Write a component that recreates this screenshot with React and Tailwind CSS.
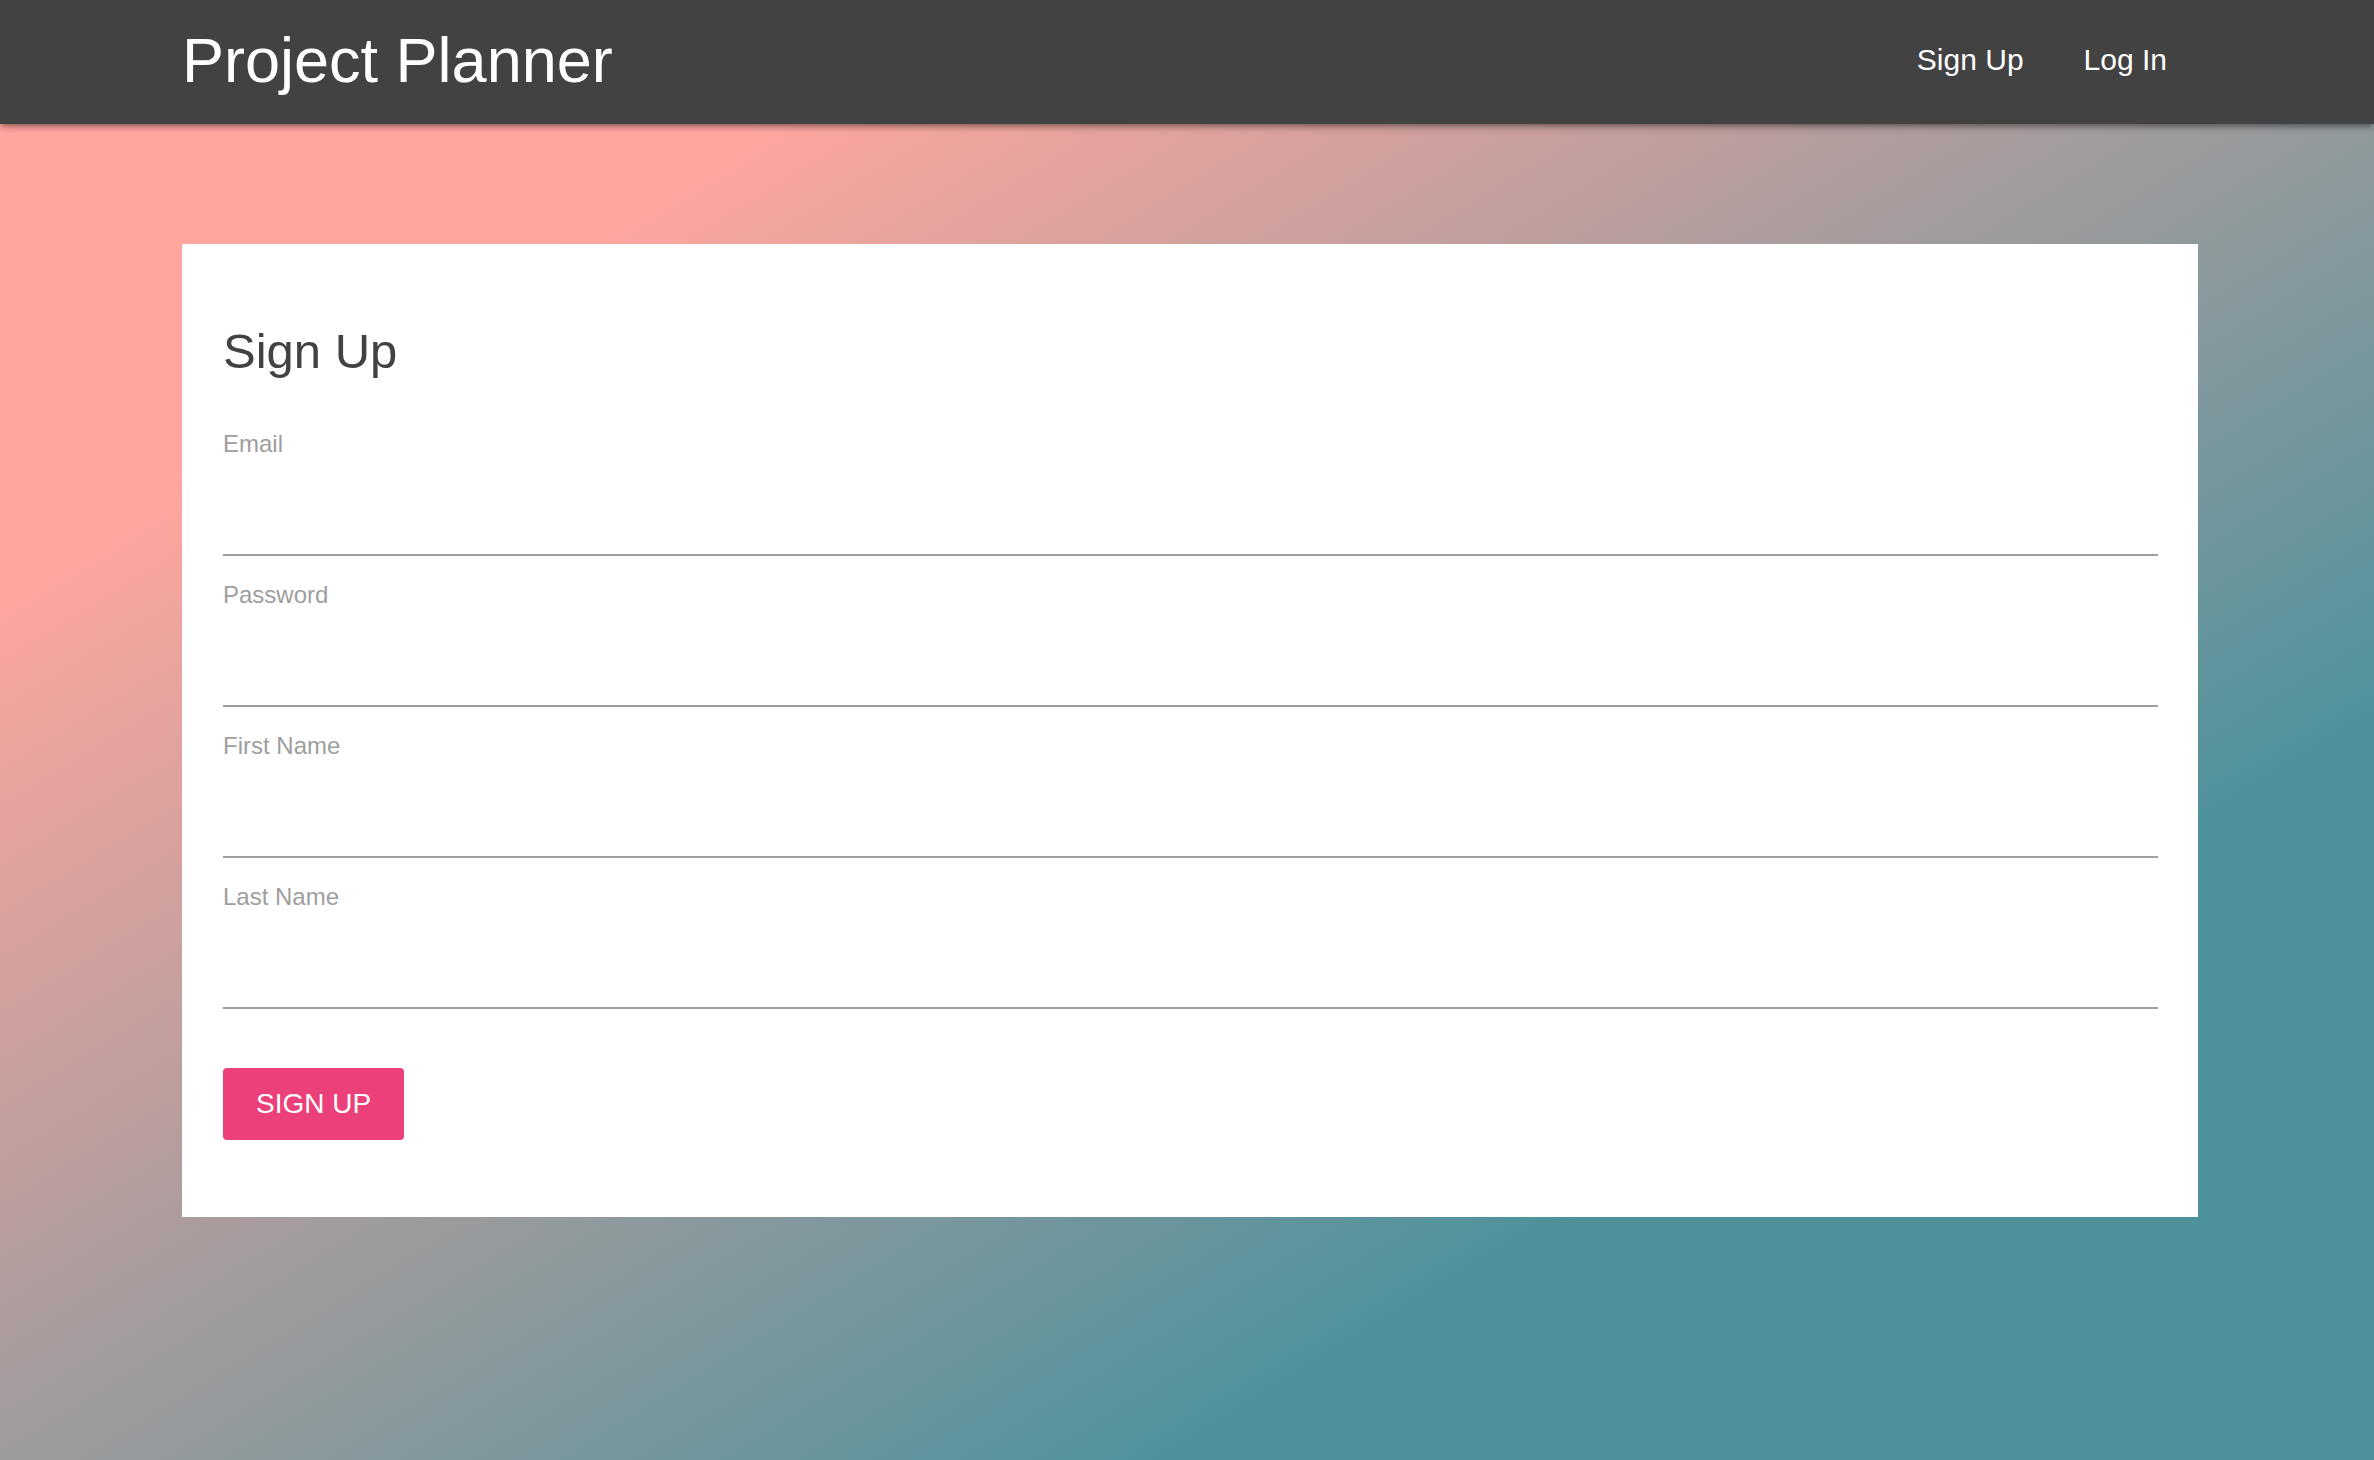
import { useState } from "react";

const fields = [
  { id: "email", label: "Email", type: "email" },
  { id: "password", label: "Password", type: "password" },
  { id: "firstName", label: "First Name", type: "text" },
  { id: "lastName", label: "Last Name", type: "text" },
];

export default function App() {
  const [user, setUser] = useState({});

  const handleChange = (event) => {
    const newUser = { ...user };
    newUser[event.target.id] = event.target.value;
    setUser(newUser);
  };

  const handleSubmit = (event) => {
    event.preventDefault();
  };

  return (
    <div
      className="min-h-screen font-['Liberation_Sans',Arial,sans-serif] bg-[linear-gradient(to_bottom_right,#ffa69e_20%,#4e929c_75%)]"
    >
      <nav className="relative z-10 h-[124px] bg-[#424242] shadow-[0_4px_4px_rgba(0,0,0,0.14),0_6px_2px_-4px_rgba(0,0,0,0.12),0_2px_10px_rgba(0,0,0,0.2)]">
        <div className="flex h-full items-center justify-between pl-[182px] pr-[177px] pb-[4px]">
          <a href="#" className="text-[63px] leading-[124px] text-white">
            Project Planner
          </a>
          <ul className="flex">
            <li>
              <a href="#" className="block px-[30px] text-[30px] leading-[124px] text-white">
                Sign Up
              </a>
            </li>
            <li>
              <a href="#" className="block px-[30px] text-[30px] leading-[124px] text-white">
                Log In
              </a>
            </li>
          </ul>
        </div>
      </nav>

      <main className="pl-[182px] pr-[176px] pt-[120px] pb-[100px]">
        <form
          onSubmit={handleSubmit}
          className="bg-white pl-[41px] pr-[40px] pt-[80px] pb-[77px]"
        >
          <h2 className="text-[49px] leading-[54px] text-[#424242]">Sign Up</h2>
          <div className="mt-[54px] flex flex-col gap-[27px]">
            {fields.map((f) => (
              <div key={f.id} className="flex flex-col">
                <label htmlFor={f.id} className="text-[24px] leading-[24px] text-[#9e9e9e]">
                  {f.label}
                </label>
                <input
                  id={f.id}
                  type={f.type}
                  onChange={handleChange}
                  className="h-[100px] w-full border-b-2 border-[#9e9e9e] bg-transparent text-[30px] text-[#424242] outline-none"
                />
              </div>
            ))}
          </div>
          <button
            type="submit"
            className="mt-[59px] h-[72px] rounded-[4px] bg-[#ec407a] px-[33px] text-[28px] uppercase text-white"
          >
            Sign Up
          </button>
        </form>
      </main>
    </div>
  );
}
